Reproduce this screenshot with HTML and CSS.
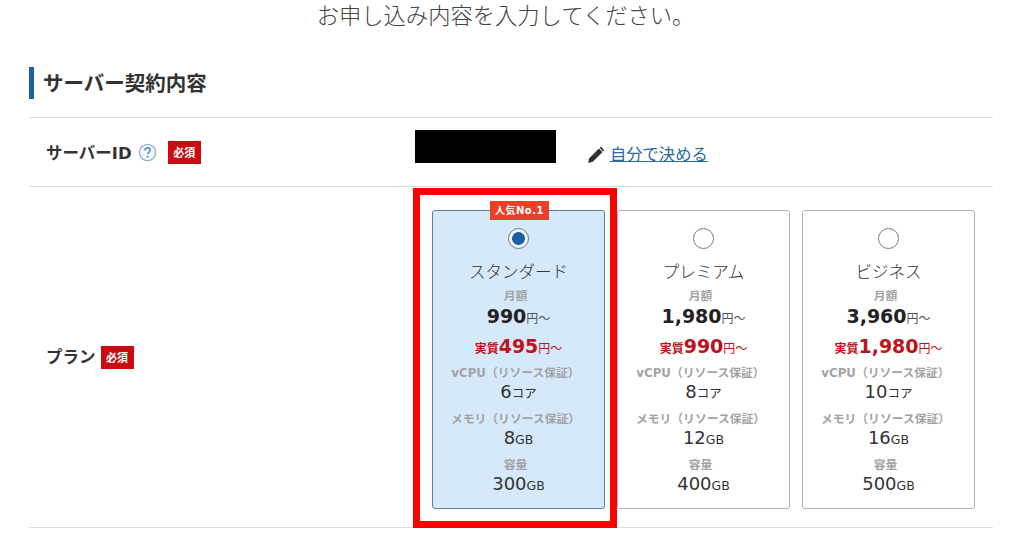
FILE: index.html
```html
<!DOCTYPE html>
<html lang="ja">
<head>
    <meta charset="UTF-8">
    <title>お申し込み内容</title>
    <link rel="stylesheet" href="styles.css">
</head>
<body>

<p class="lead">お申し込み内容を入力してください。</p>

<div class="container">
    <h2 class="section-title">サーバー契約内容</h2>

    <div class="row row-id">
        <div class="row-label">
            <span>サーバーID</span>
            <svg class="help" viewBox="0 0 20 20" width="19" height="19">
                <circle cx="10" cy="10" r="8.6" fill="#f2f7fb" stroke="#8fb3cf" stroke-width="1.4"/>
                <path d="M7.2 7.8c0-1.7 1.3-2.7 2.9-2.7s2.8 1 2.8 2.4c0 2.1-2.7 2.1-2.7 4.3" fill="none" stroke="#5f93bb" stroke-width="1.7"/>
                <circle cx="10.2" cy="14.6" r="1.1" fill="#5f93bb"/>
            </svg>
            <span class="required">必須</span>
        </div>
        <div class="row-body id-body">
            <div class="redacted"></div>
            <svg class="pencil" viewBox="0 0 16 16" width="18" height="18">
                <path d="M1 15l1-4.2L10.600 2.200l3.200 3.200L5.200 14z" fill="#333"/>
                <path d="M11.600 1.200a1 1 0 0 1 1.400 0l1.800 1.800a1 1 0 0 1 0 1.400l-.4.4-3.200-3.200z" fill="#333"/>
            </svg>
            <a class="self-link" href="#">自分で決める</a>
        </div>
    </div>

    <div class="row row-plan">
        <div class="row-label">
            <span>プラン</span>
            <span class="required">必須</span>
        </div>
        <div class="row-body plans">
            <div class="plan selected">
                <span class="badge">人気No.1</span>
                <span class="radio"></span>
                <div class="plan-name">スタンダード</div>
                <div class="caption">月額</div>
                <div class="price">990<small>円～</small></div>
                <div class="real"><small class="real-label">実質</small>495<small>円～</small></div>
                <div class="caption spec-first">vCPU（リソース保証）</div>
                <div class="value">6<small>コア</small></div>
                <div class="caption spec">メモリ（リソース保証）</div>
                <div class="value">8<small>GB</small></div>
                <div class="caption spec">容量</div>
                <div class="value">300<small>GB</small></div>
            </div>
            <div class="plan">
                <span class="radio"></span>
                <div class="plan-name">プレミアム</div>
                <div class="caption">月額</div>
                <div class="price">1,980<small>円～</small></div>
                <div class="real"><small class="real-label">実質</small>990<small>円～</small></div>
                <div class="caption spec-first">vCPU（リソース保証）</div>
                <div class="value">8<small>コア</small></div>
                <div class="caption spec">メモリ（リソース保証）</div>
                <div class="value">12<small>GB</small></div>
                <div class="caption spec">容量</div>
                <div class="value">400<small>GB</small></div>
            </div>
            <div class="plan">
                <span class="radio"></span>
                <div class="plan-name">ビジネス</div>
                <div class="caption">月額</div>
                <div class="price">3,960<small>円～</small></div>
                <div class="real"><small class="real-label">実質</small>1,980<small>円～</small></div>
                <div class="caption spec-first">vCPU（リソース保証）</div>
                <div class="value">10<small>コア</small></div>
                <div class="caption spec">メモリ（リソース保証）</div>
                <div class="value">16<small>GB</small></div>
                <div class="caption spec">容量</div>
                <div class="value">500<small>GB</small></div>
            </div>
        </div>
        <!-- annotation drawn over the first plan -->
        <div class="highlight"></div>
    </div>
</div>

</body>
</html>
```

FILE: styles.css
```css
body {
    font-family: "DejaVu Sans", "Noto Sans CJK JP", sans-serif;
    background-color: #fff;
    color: #333;
    margin: 0;
    padding: 0;
}
.lead {
    margin: 0;
    padding-right: 13px;
    height: 32px;
    line-height: 29px;
    font-family: "Noto Sans CJK JP", sans-serif;
    font-size: 22.300px;
    font-weight: 300;
    text-align: center;
    color: #444;
}
.container {
    width: 964px;
    margin-left: 29px;
}
.section-title {
    margin: 35px 0 18px;
    height: 32px;
    line-height: 31px;
    padding-left: 9px;
    border-left: 5px solid #1b5fa5;
    font-family: "Noto Sans CJK JP", sans-serif;
    font-size: 20.500px;
    font-weight: 700;
    color: #333;
}
.row {
    display: flex;
    position: relative;
    border-top: 1px solid #ddd;
}
.row-id {
    height: 68px;
}
.row-plan {
    height: 340px;
    border-bottom: 1px solid #ddd;
}
.row-label {
    display: flex;
    align-items: center;
    width: 386px;
    padding-left: 17px;
    box-sizing: border-box;
    font-family: "DejaVu Sans", "Noto Sans CJK JP", sans-serif;
    font-size: 16.500px;
    font-weight: 700;
    color: #333;
}
.help {
    margin-left: 6px;
}
.required {
    display: inline-block;
    width: 33px;
    height: 23px;
    line-height: 23px;
    margin-left: 11px;
    background-color: #cc0a12;
    color: #fff;
    font-family: "Noto Sans CJK JP", sans-serif;
    font-size: 11px;
    font-weight: 700;
    text-align: center;
}
.row-plan .row-label > span:first-child {
    margin-top: -3px;
}
.row-plan .required {
    margin-left: 5px;
}
.id-body {
    display: flex;
    align-items: center;
}
.redacted {
    width: 141px;
    height: 33px;
    margin-top: -12px;
    background-color: #000;
}
.pencil {
    margin: 5px 5px 0 31px;
}
.self-link {
    margin-top: 1px;
    color: #2a6a9e;
    font-family: "Noto Sans CJK JP", sans-serif;
    font-size: 16.300px;
}
.plans {
    display: flex;
    gap: 12px;
    padding: 23px 0 0 17px;
}
.plan {
    position: relative;
    box-sizing: border-box;
    width: 173px;
    height: 299px;
    padding-top: 17px;
    border: 1px solid #b3b3b3;
    border-radius: 3px;
    text-align: center;
    font-family: "DejaVu Sans", "Noto Sans CJK JP", sans-serif;
}
.plan.selected {
    background-color: #d5e9fb;
    border-color: #5f7f99;
}
.badge {
    position: absolute;
    top: -10px;
    left: 57px;
    width: 59px;
    height: 19px;
    line-height: 19px;
    background-color: #ee3f2a;
    color: #fff;
    font-size: 10px;
    font-weight: 700;
    letter-spacing: .5px;
    white-space: nowrap;
}
.radio {
    display: block;
    box-sizing: border-box;
    width: 21px;
    height: 21px;
    margin: 0 auto;
    border: 1px solid #777;
    border-radius: 50%;
    background-color: #fff;
}
.selected .radio {
    background: radial-gradient(circle, #1b5fa5 0 6px, #eef5fb 6.800px);
}
.plan-name {
    margin-top: 10px;
    height: 24px;
    line-height: 24px;
    font-family: "Noto Sans CJK JP", sans-serif;
    font-size: 16.500px;
    font-weight: 300;
    color: #333;
}
.caption {
    height: 16px;
    line-height: 16px;
    padding-right: 6px;
    font-size: 11.800px;
    font-weight: 700;
    color: #a3a3a3;
    white-space: nowrap;
}
.plan-name + .caption {
    margin-top: 5px;
}
.spec-first {
    margin-top: 6px;
}
.spec {
    margin-top: 9px;
}
.price, .real {
    font-size: 19px;
    font-weight: 700;
    height: 25px;
    line-height: 25px;
    color: #222;
    white-space: nowrap;
}
.real {
    margin-top: 5px;
    color: #bb1420;
}
.price small, .real small {
    font-size: 12px;
    font-weight: 400;
    color: #555;
}
.real small {
    color: #bb1420;
}
.real .real-label {
    font-size: 12px;
    font-weight: 700;
}
.value {
    height: 21px;
    line-height: 21px;
    font-size: 18px;
    color: #333;
}
.value small {
    font-size: 12.500px;
}
.highlight {
    position: absolute;
    top: 1px;
    left: 384px;
    width: 204px;
    height: 340px;
    box-sizing: border-box;
    border: 7px solid #f00;
}
```
